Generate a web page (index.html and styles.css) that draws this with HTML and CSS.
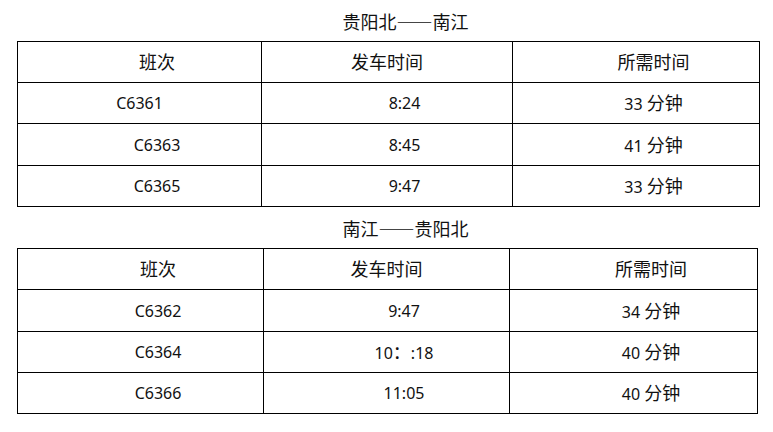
FILE: index.html
```html
<!DOCTYPE html>
<html lang="zh-CN">
<head>
<meta charset="utf-8">
<title>时刻表</title>
<link rel="stylesheet" href="styles.css">
</head>
<body>
<div class="page">
  <div class="title"><span class="zh">贵阳北——南江</span></div>
  <table class="sched t1">
    <colgroup><col class="c1"><col class="c2"><col class="c3"></colgroup>
    <tr><td class="in"><span class="zh">班次</span></td><td><span class="zh">发车时间</span></td><td class="in"><span class="zh">所需时间</span></td></tr>
    <tr><td>C6361</td><td class="in">8:24</td><td class="in">33 <span class="zh">分钟</span></td></tr>
    <tr class="tall"><td class="in">C6363</td><td class="in">8:45</td><td class="in">41 <span class="zh">分钟</span></td></tr>
    <tr><td class="in">C6365</td><td class="in">9:47</td><td class="in">33 <span class="zh">分钟</span></td></tr>
  </table>
  <div class="title"><span class="zh">南江——贵阳北</span></div>
  <table class="sched t2">
    <colgroup><col class="c1"><col class="c2"><col class="c3"></colgroup>
    <tr><td class="in"><span class="zh">班次</span></td><td><span class="zh">发车时间</span></td><td class="in"><span class="zh">所需时间</span></td></tr>
    <tr class="tall"><td class="in">C6362</td><td class="in">9:47</td><td class="in">34 <span class="zh">分钟</span></td></tr>
    <tr><td class="in">C6364</td><td class="in">10<span class="zh">：</span>:18</td><td class="in">40 <span class="zh">分钟</span></td></tr>
    <tr><td class="in">C6366</td><td class="in">11:05</td><td class="in">40 <span class="zh">分钟</span></td></tr>
  </table>
</div>
</body>
</html>
```

FILE: styles.css
```css
html, body {
  margin: 0;
  padding: 0;
  background: #ffffff;
}

body {
  font-family: "Noto Sans", "Noto Sans CJK SC", sans-serif;
  font-size: 16px;
  color: #111111;
}

.page {
  display: flex;
  flex-direction: column;
  padding-left: 17px;
  width: 742px;
}

.zh {
  font-family: "Noto Sans CJK SC", sans-serif;
  font-size: 18px;
}

.title {
  height: 41px;
  display: flex;
  align-items: center;
  justify-content: center;
  padding-left: 35px;
}

.sched {
  border-collapse: collapse;
  table-layout: fixed;
}

.sched td {
  border: 1px solid #000000;
  height: 40px;
  padding: 0;
  text-align: center;
  vertical-align: middle;
  line-height: 20px;
  white-space: nowrap;
}

.sched tr.tall td {
  height: 41px;
}

.sched td.in {
  padding-left: 35px;
}

.t1 { width: 742px; }
.t1 .c1 { width: 244px; }
.t1 .c2 { width: 251px; }
.t1 .c3 { width: 247px; }

.t2 { width: 740px; }
.t2 .c1 { width: 246px; }
.t2 .c2 { width: 246px; }
.t2 .c3 { width: 248px; }
```
